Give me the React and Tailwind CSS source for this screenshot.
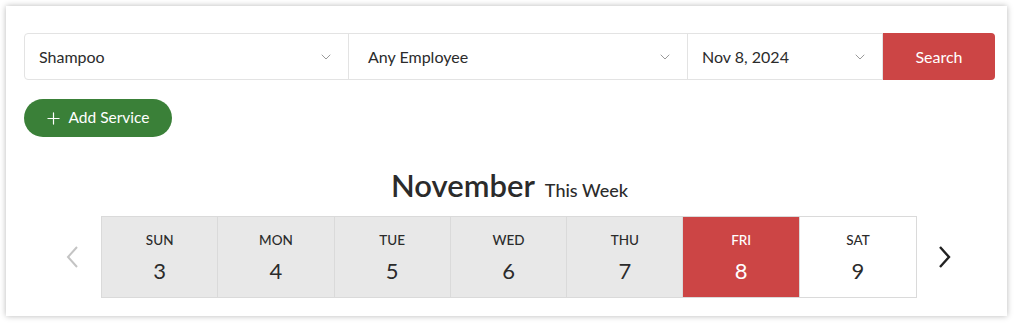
import { ChevronDown, Plus } from 'lucide-react'

const days = [
  { d: 'SUN', n: 3 },
  { d: 'MON', n: 4 },
  { d: 'TUE', n: 5 },
  { d: 'WED', n: 6 },
  { d: 'THU', n: 7 },
  { d: 'FRI', n: 8, active: true },
  { d: 'SAT', n: 9, future: true },
]

function Select({ label, className }) {
  return (
    <div className={`flex items-center justify-between pl-[14px] pr-[14px] border-r border-[#e3e3e3] ${className}`}>
      <span className="text-[16px] text-[#2b2b2b]">{label}</span>
      <ChevronDown size={16} strokeWidth={1.3} className="text-[#8a8a8a]" />
    </div>
  )
}

export default function App() {
  return (
    <div className="bg-white p-[6px] w-[1016px] h-[324px]" style={{ fontFamily: 'Lato, "Open Sans", sans-serif' }}>
      <div className="bg-white shadow-[0_0_6px_rgba(0,0,0,0.28)] h-[310px] w-[1001px] pl-[18px] pr-[12px] pt-[27px]">
        <div className="flex h-[47px] border border-[#e3e3e3] rounded-[4px]">
          <Select label="Shampoo" className="w-[324px]" />
          <Select label="Any Employee" className="w-[339px] pl-[19px]" />
          <Select label="Nov 8, 2024" className="w-[195px]" />
          <button className="flex-1 -my-px -mr-px bg-[#cc4545] text-white text-[16px] rounded-r-[4px]">Search</button>
        </div>

        <button className="mt-[19px] h-[38px] w-[148px] rounded-full bg-[#3a8038] text-white text-[15.5px] flex items-center justify-center gap-[5px] pr-[2px]">
          <Plus size={19} strokeWidth={1.5} />
          <span>Add Service</span>
        </button>

        <div className="mt-[30px] flex items-baseline justify-center gap-[10px]">
          <h1 className="text-[31px] font-semibold text-[#2b2b2b] leading-[36px]">November</h1>
          <span className="text-[18px] font-medium text-[#2b2b2b]">This Week</span>
        </div>

        <div className="mt-[12px] flex items-center">
          <button className="w-[40px] ml-[28px] mr-[9px] flex justify-center text-[#c4c4c4]">
            <svg width="14" height="24" viewBox="0 0 14 24" fill="none" stroke="currentColor" strokeWidth="2">
              <path d="M12 2 L3 12 L12 22" />
            </svg>
          </button>
          <div className="flex border border-[#dadada]">
            {days.map(x => (
              <div
                key={x.d}
                className={`w-[116.3px] h-[80px] flex flex-col items-center pt-[14px] border-r border-[#dadada] last:border-r-0 ${x.active ? 'bg-[#cc4545] text-white' : x.future ? 'bg-white text-[#2b2b2b]' : 'bg-[#e8e8e8] text-[#2b2b2b]'}`}
              >
                <span className="text-[13.5px] leading-[18px] font-medium">{x.d}</span>
                <span className="text-[22px] leading-[28px] mt-[8px]">{x.n}</span>
              </div>
            ))}
          </div>
          <button className="w-[40px] ml-[8px] flex justify-center text-[#222]">
            <svg width="14" height="24" viewBox="0 0 14 24" fill="none" stroke="currentColor" strokeWidth="2.4">
              <path d="M2 2 L11 12 L2 22" />
            </svg>
          </button>
        </div>
      </div>
    </div>
  )
}
